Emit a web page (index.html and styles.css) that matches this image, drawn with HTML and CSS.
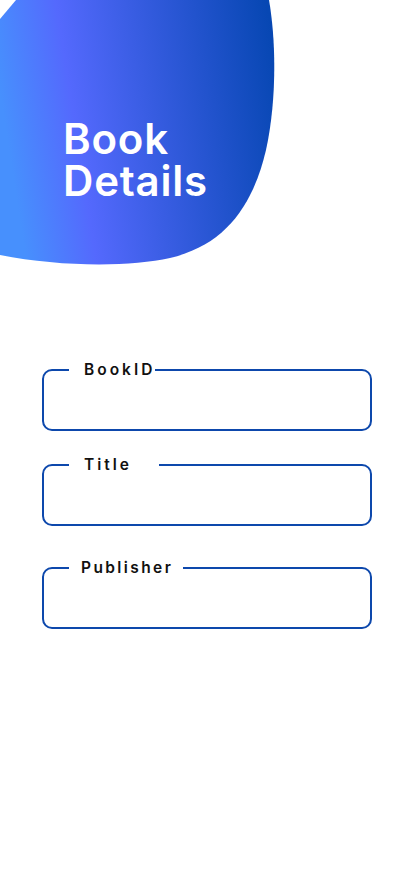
FILE: index.html
```html
<!DOCTYPE html>
<html lang="en">
<head>
<meta charset="utf-8">
<meta name="viewport" content="width=device-width, initial-scale=1">
<title>Book Details</title>
<link rel="stylesheet" href="styles.css">
</head>
<body>
<header class="hero">
  <svg class="blob" width="280" height="268" viewBox="0 0 280 268" aria-hidden="true">
    <defs>
      <linearGradient id="g" x1="0" y1="0.35" x2="1" y2="0.2">
        <stop offset="0" stop-color="#4790fd"/>
        <stop offset="0.25" stop-color="#5469fd"/>
        <stop offset="1" stop-color="#0747b3"/>
      </linearGradient>
    </defs>
    <path d="M16,0 L269,0 C276,40 277,100 266,150 C253,205 226,245 170,258 C130,267 60,267 0,255 L0,19 Z" fill="url(#g)"/>
  </svg>
  <h1 class="hero-title">Book<br>Details</h1>
</header>
<main class="form">
  <fieldset class="field field-id">
    <legend class="label">BookID</legend>
    <div class="field-body"></div>
  </fieldset>
  <fieldset class="field field-title">
    <legend class="label">Title</legend>
    <div class="field-body"></div>
  </fieldset>
  <fieldset class="field field-pub">
    <legend class="label">Publisher</legend>
    <div class="field-body"></div>
  </fieldset>
</main>
</body>
</html>
```
FILE: styles.css
```css
html, body {
  margin: 0;
  padding: 0;
  background: #ffffff;
  font-family: "Inter", "Open Sans", sans-serif;
}

.hero {
  display: grid;
  height: 266px;
}

.blob,
.hero-title {
  grid-area: 1 / 1;
}

.blob {
  display: block;
}

.hero-title {
  margin: 0;
  padding: 118px 0 0 63px;
  color: #ffffff;
  font-family: "Inter", sans-serif;
  font-weight: 600;
  font-size: 42px;
  line-height: 42px;
  letter-spacing: 0.8px;
}

.form {
  display: flex;
  flex-direction: column;
  padding-top: 94px;
}

.field {
  margin: 0 42px;
  padding: 0 0 0 25px;
  border: 2px solid #0d48ac;
  border-radius: 10px;
  min-inline-size: 0;
}

.field-title {
  margin-top: 24px;
}

.field-pub {
  margin-top: 32px;
}

.label {
  padding: 0 0 0 15px;
  font-family: "Inter", sans-serif;
  font-weight: 600;
  font-size: 15.5px;
  line-height: 20px;
  letter-spacing: 3px;
  color: #111111;
}

.field-title .label {
  padding-right: 27px;
}

.field-pub .label {
  padding-left: 12px;
  padding-right: 10px;
  letter-spacing: 2.4px;
}

.field-body {
  height: 49px;
}
```
